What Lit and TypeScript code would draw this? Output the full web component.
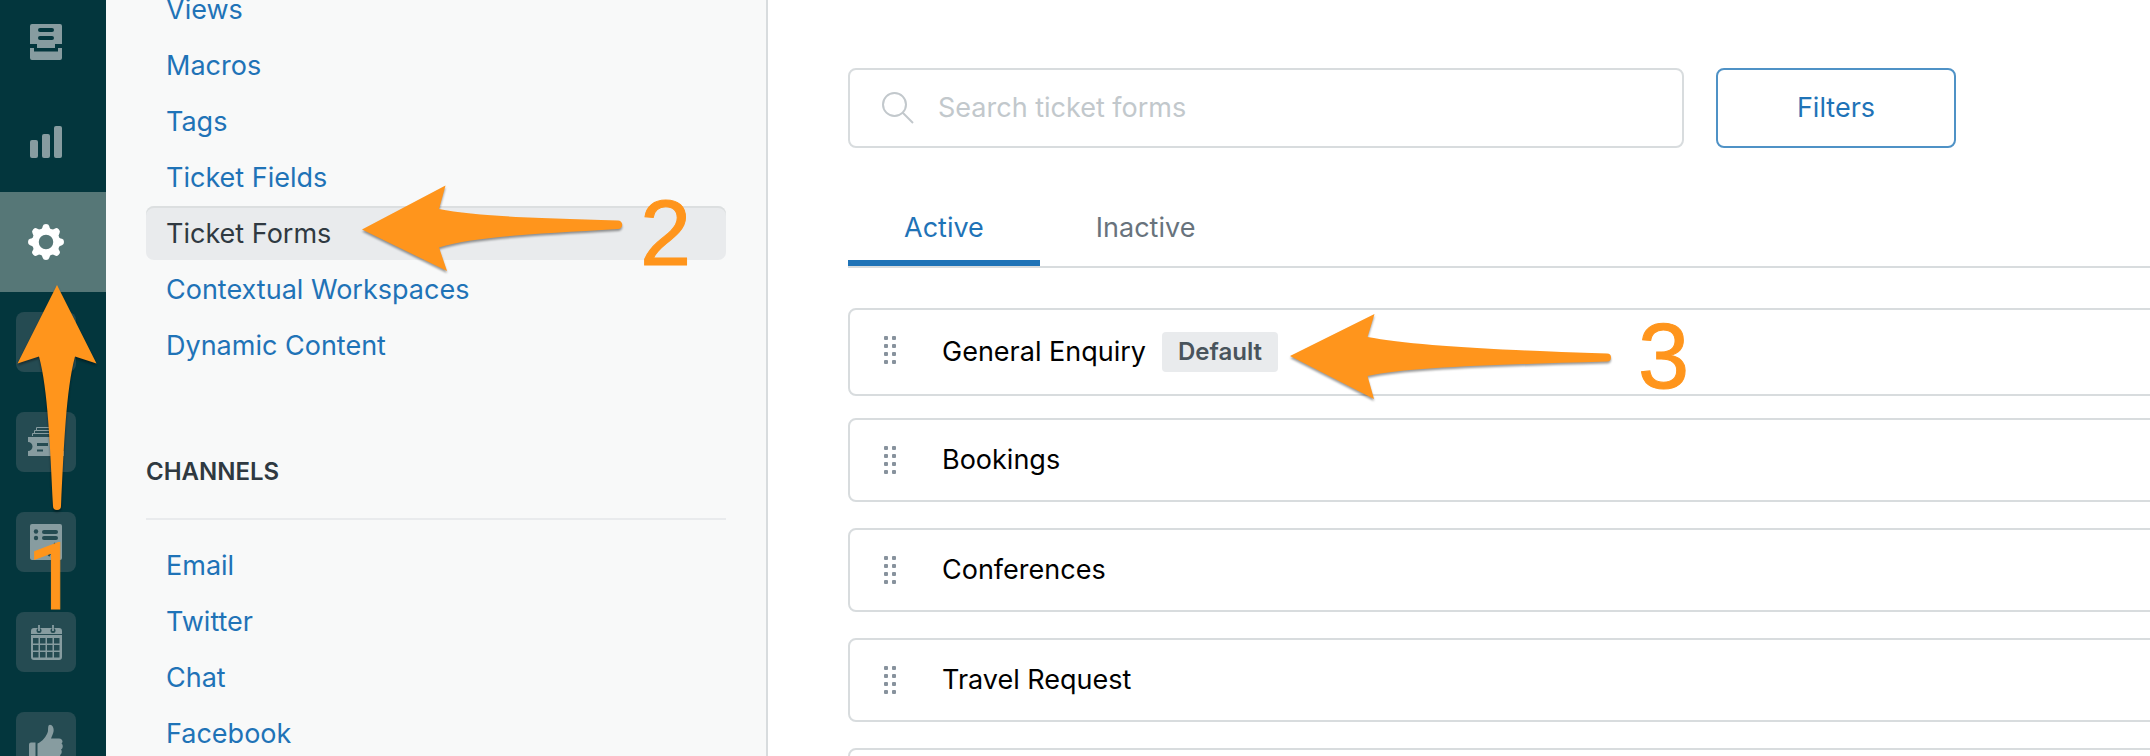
import { LitElement, html, css, svg } from "lit";
import { customElement, state } from "lit/decorators.js";
import { classMap } from "lit/directives/class-map.js";

const gearTooth = "M-7 -11.500 Q-3.600 -13 -3.200 -16 Q-2.800 -18 0 -18 Q2.800 -18 3.200 -16 Q3.600 -13 7 -11.500 L5 -8 H-5 Z";

const icons = {
  inbox: svg`
    <path fill-rule="evenodd" d="M4 0H32a2 2 0 0 1 2 2V20H27V24H9V20H2V2a2 2 0 0 1 2-2Z
      M12 4a2 2 0 0 0 0 4H24a2 2 0 0 0 0-4ZM12 12a2 2 0 0 0 0 4H24a2 2 0 0 0 0-4Z"/>
    <path d="M2 24H6V27.500H30V24H34V34a2 2 0 0 1-2 2H4a2 2 0 0 1-2-2Z"/>`,
  bars: svg`
    <rect x="2" y="16" width="8" height="18" rx="2"/>
    <rect x="14" y="10" width="8" height="24" rx="2"/>
    <rect x="26" y="2" width="8" height="32" rx="2"/>`,
  gear: svg`
    <g transform="translate(18 18)">
      <circle r="10.500" fill="none" stroke="currentColor" stroke-width="6.500"/>
      ${[0, 45, 90, 135, 180, 225, 270, 315].map(
        (a) => svg`<path d=${gearTooth} transform="rotate(${a})"/>`
      )}
    </g>`,
  apps: svg``,
  tickets: svg`
    <path fill="none" stroke="currentColor" d="M8.500 6V3.500H27.500V6M6.500 9V6.500H29.500V9M4.500 12V9.500H31.500V12"/>
    <path fill-rule="evenodd" d="M0 13H36V18a4 4 0 0 0 0 9V32H0V27a4.500 4.500 0 0 0 0-9Z
      M9 19V22H20V19ZM9 25.500V27.500H15V25.500Z"/>`,
  checklist: svg`
    <rect x="2" width="32" height="36" rx="2"/>
    <g class="cut">
      <circle cx="8" cy="7.500" r="2.200"/>
      <circle cx="8" cy="14" r="2.200"/>
      <rect x="14" y="6" width="16" height="4" rx="2"/>
      <rect x="14" y="12" width="16" height="4" rx="2"/>
    </g>
    <path class="cut-line" d="M17 26L21 30L28 19.500"/>`,
  calendar: svg`
    <path d="M6 4H31a3 3 0 0 1 3 3V10H3V7a3 3 0 0 1 3-3ZM3 11H34V33a3 3 0 0 1-3 3H6a3 3 0 0 1-3-3Z"/>
    <g class="cut">
      ${[14, 21, 28].map((y) =>
        [5, 12, 19, 26].map((x) => svg`<rect x=${x} y=${y} width="5.500" height="5.500"/>`)
      )}
      <circle cx="11" cy="6.500" r="2.500"/>
      <circle cx="25" cy="6.500" r="2.500"/>
    </g>
    <path fill="none" stroke="currentColor" stroke-width="1.800" d="M11 1V7M25 1V7"/>`,
  thumb: svg`
    <path d="M3 18.500H7.500V36H1V20.500a2 2 0 0 1 2-2Z"/>
    <path d="M9.500 36V19.500C14 18 19 12 20 7C20.200 3 20 1 22 .700C25.500 1 26.500 6 25 9.500L23 14.500H31
      C34.500 14.500 35.500 18 33.500 19.500C35.500 21 35 24.500 33 25.500C34.500 27.500 33.500 30 32 31C33 33 32 36 30 36Z"/>`,
};

const rail = [
  { icon: "inbox", label: "Views", tile: false },
  { icon: "bars", label: "Reporting", tile: false },
  { icon: "gear", label: "Admin", tile: false },
  { icon: "apps", label: "Apps", tile: true },
  { icon: "tickets", label: "Tickets", tile: true },
  { icon: "checklist", label: "Tasks", tile: true },
  { icon: "calendar", label: "Calendar", tile: true },
  { icon: "thumb", label: "Satisfaction", tile: true },
];

const manage = [
  "Views",
  "Macros",
  "Tags",
  "Ticket Fields",
  "Ticket Forms",
  "Contextual Workspaces",
  "Dynamic Content",
];
const channels = ["Email", "Twitter", "Chat", "Facebook"];
const forms = [
  { name: "General Enquiry", isDefault: true },
  { name: "Bookings", isDefault: false },
  { name: "Conferences", isDefault: false },
  { name: "Travel Request", isDefault: false },
  { name: "", isDefault: false },
];

@customElement("app-rail")
class AppRail extends LitElement {
  static styles = css`
    :host {
      display: block;
      flex: none;
      width: 106px;
      background: #03363d;
      overflow: hidden;
    }
    .items {
      display: flex;
      flex-direction: column;
      margin-top: -8px;
    }
    .item {
      display: flex;
      align-items: center;
      height: 100px;
      padding-left: 16px;
      color: #879ca0;
    }
    .current {
      background: #567777;
      color: #fff;
    }
    .box {
      display: grid;
      place-items: center;
      width: 60px;
      height: 60px;
      border-radius: 8px;
    }
    .tile {
      background: #254b52;
    }
    .icon {
      display: block;
      width: 36px;
      height: 36px;
      fill: currentColor;
    }
    .cut {
      fill: #254b52;
    }
    .cut-line {
      fill: none;
      stroke: #254b52;
      stroke-width: 3.5;
    }
  `;

  render() {
    return html`<nav class="items" aria-label="Main">
      ${rail.map(
        (r) => html`<a
          href="#"
          aria-label=${r.label}
          class=${classMap({ item: true, current: r.icon === "gear" })}
          ><span class=${classMap({ box: true, tile: r.tile })}
            ><svg class="icon" viewBox="0 0 36 36">${icons[r.icon]}</svg></span
          ></a
        >`
      )}
    </nav>`;
  }
}

@customElement("app-root")
class AppRoot extends LitElement {
  @state() tab = "Active";

  static styles = css`
    :host {
      display: flex;
      position: relative;
      height: 100vh;
      overflow: hidden;
      background: #fff;
      color: #2f3941;
      font-family: Inter, "Liberation Sans", sans-serif;
      font-size: 27px;
      line-height: 36px;
    }
    * {
      box-sizing: border-box;
    }
    a {
      color: inherit;
      text-decoration: none;
    }
    ul {
      list-style: none;
      margin: 0;
      padding: 0;
    }

    .settings {
      flex: none;
      width: 662px;
      padding: 0 40px;
      background: #f8f9f9;
      border-right: 2px solid #d8dcde;
      overflow: hidden;
    }
    .links {
      display: flex;
      flex-direction: column;
      gap: 2px;
    }
    .manage {
      margin-top: -18px;
    }
    .link {
      display: block;
      padding: 10px 20px 8px;
      border-radius: 8px;
      color: #1f73b7;
    }
    .selected {
      background: #e9ebed;
      box-shadow: inset 0 2px 0 #dcdfe0;
      color: #2f3941;
    }
    .heading {
      margin: 84px 0 18px;
      padding-bottom: 30px;
      border-bottom: 2px solid #e9ebed;
      font-size: 24px;
      font-weight: 600;
      line-height: 32px;
    }

    .content {
      flex: 1;
      min-width: 0;
      padding: 68px 0 0 80px;
    }
    .toolbar {
      display: flex;
      gap: 32px;
      max-width: 1108px;
    }
    .search {
      display: flex;
      align-items: center;
      gap: 24px;
      flex: 1;
      height: 80px;
      padding: 0 32px;
      border: 2px solid #d8dcde;
      border-radius: 8px;
    }
    .glass {
      flex: none;
      width: 32px;
      height: 32px;
      fill: none;
      stroke: #c2c8cc;
      stroke-width: 2;
    }
    .field {
      flex: 1;
      min-width: 0;
      padding: 0;
      border: 0;
      outline: 0;
      background: none;
      color: inherit;
      font: inherit;
    }
    .field::placeholder {
      color: #c2c8cc;
      opacity: 1;
    }
    .filters {
      width: 240px;
      height: 80px;
      border: 2px solid #4f92c6;
      border-radius: 8px;
      background: #fff;
      color: #1f73b7;
      font: inherit;
    }
    .tabs {
      display: flex;
      margin-top: 60px;
      border-bottom: 2px solid #d8dcde;
    }
    .tab {
      padding: 2px 56px 14px;
      border: 0;
      border-bottom: 6px solid transparent;
      background: none;
      color: #68737d;
      font: inherit;
    }
    .tab-on {
      border-color: #1f73b7;
      color: #1f73b7;
    }
    .forms {
      display: grid;
      grid-auto-rows: 110px;
      align-items: start;
      margin: 40px -16px 0 0;
    }
    .card {
      display: flex;
      align-items: center;
      min-height: 84px;
      padding: 22px 34px;
      border: 2px solid #d8dcde;
      border-radius: 8px;
      color: #000;
    }
    .grip {
      align-self: flex-start;
      display: block;
      margin: 4px 46px 0 0;
      padding: 0;
      border: 0;
      background: none;
      cursor: grab;
    }
    .dots {
      display: block;
      width: 12px;
      height: 28px;
      fill: #87929d;
    }
    .badge {
      margin-left: 16px;
      padding: 0 16px;
      border-radius: 4px;
      background: #e9ebed;
      color: #49545c;
      font-size: 24px;
      font-weight: 600;
      line-height: 40px;
    }

    .arrow {
      position: absolute;
      overflow: visible;
      fill: #ff951c;
      filter: drop-shadow(0 2px 1px rgba(0, 0, 0, 0.4));
      pointer-events: none;
    }
    .arrow-1 {
      left: 17px;
      top: 285px;
      width: 80px;
      height: 228px;
    }
    .arrow-2 {
      left: 362px;
      top: 185px;
      width: 262px;
      height: 88px;
    }
    .arrow-3 {
      left: 1290px;
      top: 314px;
      width: 322px;
      height: 86px;
    }
    .step {
      position: absolute;
      color: #ff951c;
      font-family: "Liberation Sans", sans-serif;
      font-size: 92px;
      line-height: 92px;
      -webkit-text-stroke: 1px #ff951c;
      pointer-events: none;
    }
    .step-1 {
      left: 27px;
      top: 532px;
      font-family: Roboto, "Liberation Sans", sans-serif;
    }
    .step-2 {
      left: 640px;
      top: 187px;
    }
    .step-3 {
      left: 1638px;
      top: 310px;
    }
  `;

  links(items: string[]) {
    return items.map(
      (t) => html`<li>
        <a href="#" class=${classMap({ link: true, selected: t === "Ticket Forms" })}>${t}</a>
      </li>`
    );
  }

  render() {
    return html`
      <app-rail></app-rail>
      <aside class="settings">
        <ul class="links manage">
          ${this.links(manage)}
        </ul>
        <h2 class="heading">CHANNELS</h2>
        <ul class="links">
          ${this.links(channels)}
        </ul>
      </aside>
      <main class="content">
        <div class="toolbar">
          <label class="search">
            <svg class="glass" viewBox="0 0 32 32" aria-hidden="true">
              <circle cx="12.500" cy="12.500" r="11.500" />
              <path d="M20.500 20.500L31 31" />
            </svg>
            <input class="field" type="text" placeholder="Search ticket forms" aria-label="Search ticket forms" />
          </label>
          <button class="filters">Filters</button>
        </div>
        <div class="tabs" role="tablist">
          ${["Active", "Inactive"].map(
            (t) => html`<button
              role="tab"
              aria-selected=${this.tab === t ? "true" : "false"}
              class=${classMap({ tab: true, "tab-on": this.tab === t })}
              @click=${() => (this.tab = t)}
            >
              ${t}
            </button>`
          )}
        </div>
        <ul class="forms">
          ${forms.map(
            (f) => html`<li class="card">
              <button class="grip" aria-label="Reorder">
                <svg class="dots" viewBox="0 0 12 28">
                  ${[0, 8, 16, 24].map(
                    (y) => svg`<rect y=${y} width="4" height="4" rx="1"/><rect x="8" y=${y} width="4" height="4" rx="1"/>`
                  )}
                </svg>
              </button>
              <a href="#">${f.name}</a>
              ${f.isDefault ? html`<span class="badge">Default</span>` : ""}
            </li>`
          )}
        </ul>
      </main>

      <svg class="arrow arrow-1" viewBox="0 0 80 228" aria-hidden="true">
        <path d="M40 0L79.500 78.500L58 71.500C49 105 47 160 44 221a4 4 0 0 1-8 0C33 160 31 105 22 71.500L.500 78.500Z" />
      </svg>
      <span class="step step-1">1</span>
      <svg class="arrow arrow-2" viewBox="0 0 262 88" aria-hidden="true">
        <path d="M0 44.500L83.500 .500L77 24C110 31 170 33 256 35.500a4 4 0 0 1 0 8.500C170 49 110 52 77 62.500L85 86Z" />
      </svg>
      <span class="step step-2">2</span>
      <svg class="arrow arrow-3" viewBox="0 0 322 86" aria-hidden="true">
        <path d="M0 42L84.500 0L77.500 23C120 31 200 36 317 39.500a4 4 0 0 1 0 8C200 51 120 53 77.500 62L84 85Z" />
      </svg>
      <span class="step step-3">3</span>
    `;
  }
}
